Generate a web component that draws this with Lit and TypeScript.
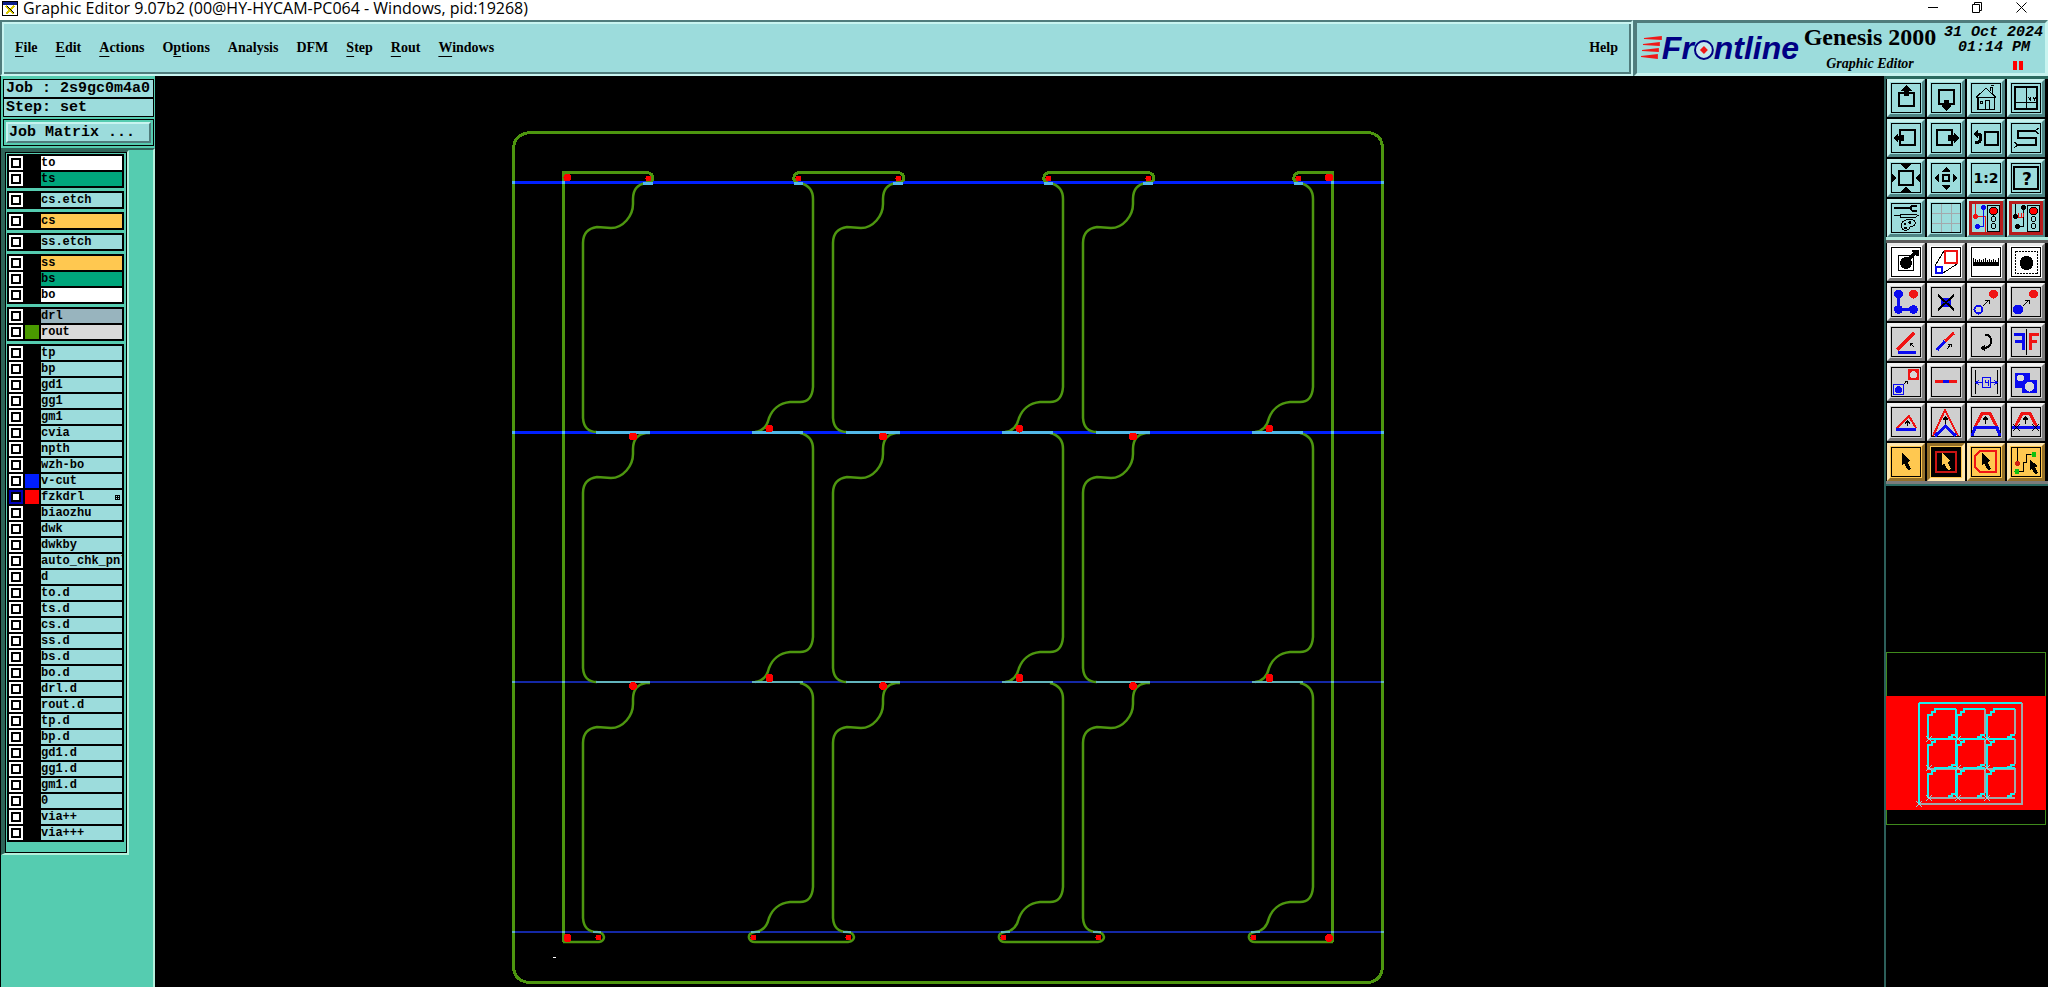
import { LitElement, html, svg, css, nothing, type SVGTemplateResult } from "lit";
import { customElement, property, state } from "lit/decorators.js";
import { classMap } from "lit/directives/class-map.js";

const BLUE = "#0a0af0";
const RED = "#f01414";

type Tone = "teal" | "alert" | "white" | "gray" | "amber" | "picked";

interface Tool {
  name: string;
  tone: Tone;
  art: SVGTemplateResult;
}

const line = (d: string, color = "#000", width = 1) =>
  svg`<path d=${d} fill="none" stroke=${color} stroke-width=${width} />`;
const shape = (d: string, color = "#000") => svg`<path d=${d} fill=${color} />`;
const dot = (x: number, y: number, r: number, color = "#000") =>
  svg`<circle cx=${x} cy=${y} r=${r} fill=${color} />`;
const ring = (x: number, y: number, r: number, color = "#000", width = 1) =>
  svg`<circle cx=${x} cy=${y} r=${r} fill="none" stroke=${color} stroke-width=${width} />`;

const pointer = (color: string) => shape("M11 6 L11 18 L13 16.5 L17 23 L20 22 L16.5 15 L19.5 14 Z", color);
const smallArrow = line("M12 19 L18 13 M14 13 H18 V17");
const upArrow = line("M14.5 17 V10 M12 12.5 L14.5 10 L17 12.5 M12.5 12.5 H16.5");
const lamps = svg`
  ${line("M16.5 2.5 H28.5 V28.5 H16.5 Z")}
  ${dot(22.5, 8, 4, "#f00")}${ring(22.5, 8, 4)}
  ${ring(22.5, 16, 2.5)}${ring(22.5, 23, 2.5)}`;

const viewTools: Tool[] = [
  { name: "Pan up", tone: "teal", art: svg`${line("M8 10 H23 V23 H8 Z", "#000", 2)}${shape("M15.5 2 L21 7 V8 H18 V13 H13 V8 H10 V7 Z")}` },
  { name: "Pan down", tone: "teal", art: svg`${line("M8 7 H23 V21 H8 Z", "#000", 2)}${shape("M13 17 H18 V22 H20 V23 L15.5 28 L11 23 V22 H13 Z")}` },
  { name: "Home", tone: "teal", art: svg`${line("M5 14.5 L15 5 L25 14.5 M7 13.5 V26 H23 V13.5 M5 14.5 H25", "#000")}${line("M6.5 14 V26 H23.5 V14", "#000", 1)}${line("M14.5 26 V17.5 H18.5 V26 M9 18 H11.5 V20.5 H9 Z M19 8 V4.5 H21.5 V10 M20 3 L23 2")}` },
  { name: "Coordinates view", tone: "teal", art: svg`${line("M4 4 H26 V26 H4 Z", "#000", 2)}${line("M15.5 4 V26 M4 19.5 H26")}${line("M17.5 14.5 L20 17.5 M20 14.5 L17.5 17.5 M22 14.5 L23.5 16 L25 14.5 M23.5 16 V18")}` },
  { name: "Pan left", tone: "teal", art: svg`${line("M9 7 H24 V22 H9 Z", "#000", 2)}${shape("M2 15 L7 10 V13 H8 V12 H13 V18 H8 V17 H7 V20 Z")}` },
  { name: "Pan right", tone: "teal", art: svg`${line("M6 7 H21 V22 H6 Z", "#000", 2)}${shape("M28 15 L23 10 V12 H17 V18 H23 V20 Z")}` },
  { name: "Previous view", tone: "teal", art: svg`${line("M14 9 H27 V22 H14 Z", "#000", 2)}${line("M4 20 Q10 20 10 14.5 Q10 11 6 11", "#000", 3)}${shape("M2 11 L7 6 V16 Z")}` },
  { name: "Snake view", tone: "teal", art: svg`${line("M24 8 H7 V15 H25 V22 H7", "#000", 2)}${line("M24 8 L28 5 M24 8 L28 11 M7 22 L3 19 M7 22 L3 25")}` },
  { name: "Zoom in", tone: "teal", art: svg`${line("M8 8 H22 V22 H8 Z", "#000", 2)}${shape("M10 1 H20 V2 L15 6 L10 2 Z M15 24 L20 28 V29 H10 V28 Z M1 10 L5 15 L1 20 Z M29 10 L25 15 L29 20 Z")}` },
  { name: "Zoom out", tone: "teal", art: svg`${line("M12 12 H18 V18 H12 Z", "#000", 2)}${shape("M15 4 L19 8 V9 H11 V8 Z M11 22 H19 V23 L15 27 L11 23 Z M4 15 L8 10 V20 Z M26 15 L22 10 V20 Z")}` },
  { name: "Actual scale", tone: "teal", art: svg`<text x="15" y="20" text-anchor="middle" class="glyph">1:2</text>` },
  { name: "Query", tone: "teal", art: svg`${line("M3 4 H27 V26 H3 Z", "#000", 2)}<text x="16" y="22" text-anchor="middle" class="glyph query">?</text>` },
  { name: "Options", tone: "teal", art: svg`${line("M3 5 H19", "#000", 2)}${line("M26 3 H21 L19 5 L21 7.5 H26", "#000", 2)}${line("M3 12.5 H9 M9 11 H24 L27 12.5 L24 14.5 H9 Z")}${line("M11 20 Q13 16 20 16.5 Q25 17 24 21 Q23 24 19 23.5 Q19 27 14 27.5 Q9 26 11 20")}${ring(14, 21, 1)}${ring(19, 19.5, 1)}${ring(14.5, 25, 1)}` },
  { name: "Grid", tone: "teal", art: line("M10.5 1 V29 M20.5 1 V29 M1 10.5 H29 M1 20.5 H29", "#a3a9ad") },
  { name: "Net check", tone: "alert", art: svg`${line("M4.5 1 V13.5 H14.5 V29", RED)}${line("M12.5 4 V23 H7", BLUE)}${dot(4.5, 13.5, 2.6, RED)}${dot(12.5, 4.5, 2.6, BLUE)}${dot(6.5, 23.5, 2.6, BLUE)}${lamps}` },
  { name: "Rule check", tone: "alert", art: svg`${line("M4.5 1 V13.5 M12.5 4 V23 H7")}${line("M5 14.5 H12 M7.5 14 V10 M10 14 V10 M12.5 14 V10", RED)}${dot(4.5, 13.5, 2.6)}${dot(12.5, 4.5, 2.6)}${dot(6.5, 23.5, 2.6)}${lamps}` },
];

const editTools: Tool[] = [
  { name: "Move feature", tone: "white", art: svg`${line("M7.5 8.5 H22.5 V23.5 H7.5 Z")}${dot(15, 16, 6)}${line("M18 12 L24 6", "#000", 3)}${shape("M21 3 H28 V9 H26 L21 5 Z")}` },
  { name: "Resize", tone: "white", art: svg`${line("M14 4 H26 V16 H14 Z", RED, 2)}${line("M5 20 H11 V26 H5 Z", BLUE, 2)}${line("M4 19 L13 4 M12 26 L26 17")}` },
  { name: "Measure", tone: "white", art: svg`${shape("M2 15 H28 V19 H2 Z")}${line("M2.5 11 V15 M4.5 12 V15 M6.5 13 V15 M8.5 12 V15 M10.5 13 V15 M12.5 12 V15 M14.5 11 V15 M16.5 13 V15 M18.5 12 V15 M20.5 13 V15 M22.5 12 V15 M24.5 13 V15 M27.5 11 V15")}` },
  { name: "Reference select", tone: "white", art: svg`<path d="M4.5 4.5 H26.5 V26.5 H4.5 Z" fill="none" stroke="#000" stroke-dasharray="2 1" />${dot(15.5, 16, 7)}` },
  { name: "Move vertex", tone: "gray", art: svg`${line("M7.5 7 V22.5 H22.5", BLUE, 3)}${dot(7.5, 7, 4.5, BLUE)}${dot(7.5, 22.5, 4.5, BLUE)}${dot(22.5, 22.5, 4.5, BLUE)}${dot(22.5, 7, 4.5, RED)}` },
  { name: "Delete", tone: "gray", art: svg`${dot(15, 15.5, 5, BLUE)}${line("M7 8 L23 23 M23 8 L7 23", "#000", 2)}` },
  { name: "Copy", tone: "gray", art: svg`${ring(7.5, 22.5, 4, BLUE, 2)}${dot(22.5, 7, 4.5, RED)}${smallArrow}` },
  { name: "Move", tone: "gray", art: svg`${dot(7, 22.5, 5, BLUE)}${dot(22.5, 7, 4.5, RED)}${smallArrow}` },
  { name: "Rotate line", tone: "gray", art: svg`${line("M6 23 L23 6", RED, 3)}${line("M7 25.5 H25", BLUE, 3)}${line("M23 20 L19 16 M19 19 V16 H22")}` },
  { name: "Extend line", tone: "gray", art: svg`${line("M6 23 L14 14", BLUE, 3)}${line("M14 14 L23 6", RED, 3)}${line("M16 22 L20 17 M17 17 H20 V20")}` },
  { name: "Rotate", tone: "gray", art: svg`${line("M14 7.5 Q20 8 20 14 Q20 21 12 21", "#000", 2)}${shape("M9 21 L14 17.5 V24.5 Z")}` },
  { name: "Mirror", tone: "gray", art: svg`${line("M3 7.5 H12.5 V23 M4 14.5 H13", BLUE, 3)}${line("M15.5 2 V28")}${line("M19.5 23 V7.5 H28 M19 14.5 H26", RED, 3)}` },
  { name: "Transform", tone: "gray", art: svg`${line("M2.5 17.5 H12.5 V27.5 H2.5 Z", BLUE)}${dot(7.5, 22.5, 3.5, BLUE)}${shape("M17 2 H28 V13 H17 Z", RED)}${dot(22.5, 7.5, 3.5, "#d8d8d8")}${line("M13 17 L16.5 14 M14 14 H16.5 V16.5")}` },
  { name: "Break line", tone: "gray", art: svg`${line("M4 14.5 H26", RED, 3)}${line("M12 14.5 H18", BLUE, 3)}` },
  { name: "Spacing", tone: "gray", art: svg`${line("M4.5 3 V27 M26.5 3 V27")}${line("M5 15.5 H11 M20 15.5 H26 M8 13 L5 15.5 L8 18 M23 13 L26 15.5 L23 18 M11.5 10.5 H19.5 V20.5 H11.5 Z M14 12.5 V15.5 H17.5 M17 12.5 V19", BLUE)}` },
  { name: "Merge", tone: "gray", art: svg`${shape("M4 6 H19 V13 H26 V26 H11 V21 H4 Z", BLUE)}${dot(9.5, 11, 3.5, "#d8d8d8")}${dot(18.5, 19.5, 5, "#d8d8d8")}` },
  { name: "Change angle", tone: "gray", art: svg`${line("M5 22 L18 9 L25 21", RED, 2)}${line("M5 22.5 H25", BLUE, 3)}${line("M16.5 19 V14 M14 16.5 L16.5 14 L19 16.5")}` },
  { name: "Move corner", tone: "gray", art: svg`${line("M2 29 L14 3 L27 29", RED, 2)}${line("M4 29 L14.5 19 L25 29", BLUE, 3)}${upArrow}` },
  { name: "Move segment", tone: "gray", art: svg`${line("M4 20 L11 6.5 H19 L26 20", RED, 3)}${line("M1 29 L4 20.5 H26 L29 29", BLUE, 3)}${upArrow}` },
  { name: "Move segment with limits", tone: "gray", art: svg`${line("M4 20 L11 6.5 H19 L26 20", RED, 3)}${line("M1 20.5 H29", BLUE, 3)}${line("M2 17 L9 24 M9 17 L2 24 M21 17 L28 24 M28 17 L21 24")}${upArrow}` },
  { name: "Select single", tone: "amber", art: pointer("#000") },
  { name: "Select frame", tone: "picked", art: svg`${shape("M1 1 H29 V29 H1 Z")}${line("M5 5 H25 V25 H5 Z", "#c81414", 2)}${pointer("#ffc850")}` },
  { name: "Select polygon", tone: "amber", art: svg`${line("M9 4 H25 V25 H9 L4 20 V9 Z", RED, 2)}${pointer("#000")}` },
  { name: "Select net", tone: "amber", art: svg`${line("M6.5 1 V16 M6 24.5 H12.5 V15.5 H15.5 V7.5 H23")}${dot(6.5, 16.5, 2.5, "#d02010")}${dot(6, 24.5, 2.5, "#10c010")}${dot(23, 7.5, 2.5, "#10c010")}${shape("M19 13 V23 L21 22 L24 27 L27 26 L24 20 L27 19 Z")}` },
];

interface Layer {
  name: string;
  tone: string;
  swatch?: string;
  active?: boolean;
}

const plain = (...names: string[]): Layer[] => names.map((name) => ({ name, tone: "plain" }));

const layerGroups: Layer[][] = [
  [{ name: "to", tone: "mask" }, { name: "ts", tone: "solder" }],
  plain("cs.etch"),
  [{ name: "cs", tone: "copper" }],
  plain("ss.etch"),
  [{ name: "ss", tone: "copper" }, { name: "bs", tone: "solder" }, { name: "bo", tone: "mask" }],
  [{ name: "drl", tone: "drill" }, { name: "rout", tone: "rout", swatch: "green" }],
  [
    ...plain("tp", "bp", "gd1", "gg1", "gm1", "cvia", "npth", "wzh-bo"),
    { name: "v-cut", tone: "plain", swatch: "blue" },
    { name: "fzkdrl", tone: "plain", swatch: "red", active: true },
    ...plain(
      "biaozhu", "dwk", "dwkby", "auto_chk_pnl", "d", "to.d", "ts.d", "cs.d", "ss.d", "bs.d", "bo.d",
      "drl.d", "rout.d", "tp.d", "bp.d", "gd1.d", "gg1.d", "gm1.d", "0", "via++", "via+++",
    ),
  ],
];

@customElement("tool-grid")
class ToolGrid extends LitElement {
  @property({ attribute: false }) tools: Tool[] = [];

  static styles = css`
    :host { display: block; }
    .grid { display: grid; grid-template-columns: repeat(4, 38px); gap: 2px; }
    button { display: grid; place-items: center; height: 38px; padding: 0; border: 3px solid; border-radius: 0; }
    svg { display: block; width: 30px; height: 30px; shape-rendering: crispEdges; }
    .teal, .alert { background: #9cdcdc; border-color: #c6f2ee #4f8484 #4f8484 #c6f2ee; }
    .alert svg { outline: 2px solid #b81c1c; outline-offset: 0; box-shadow: inset 0 0 0 1px #b81c1c; }
    .white { background: #fff; border-color: #ececec #7c7c7c #7c7c7c #ececec; }
    .gray { background: #cfcfcf; border-color: #f2f2f2 #7c7c7c #7c7c7c #f2f2f2; }
    .amber { background: #ffc850; border-color: #ffe6ae #94702a #94702a #ffe6ae; }
    .picked { background: #ffc850; border-color: #94702a #ffe6ae #ffe6ae #94702a; }
    .frame { fill: none; stroke: #000; }
    .glyph { font: bold 14px "DejaVu Sans", sans-serif; }
    .query { font: bold 17px "DejaVu Sans", sans-serif; }
  `;

  render() {
    return html`<div class="grid">
      ${this.tools.map(
        (t) => html`<button type="button" class=${t.tone} aria-label=${t.name}>
          <svg viewBox="0 0 30 30">
            ${t.tone === "alert" ? nothing : svg`<rect class="frame" x="0.5" y="0.5" width="29" height="29" />`}
            ${t.art}
          </svg>
        </button>`,
      )}
    </div>`;
  }
}

@customElement("layer-list")
class LayerList extends LitElement {
  @state() private shown = new Set<string>();

  static styles = css`
    :host { display: block; }
    .list {
      display: flex; flex-direction: column; gap: 3px; padding: 1px 2px 10px 1px;
      border: 1px solid #000;
    }
    .bevel { border-style: solid; border-width: 2px 2px 2px 4px; border-color: #2e6458 #b4f0dc #b4f0dc #2e6458; }
    .group { display: flex; flex-direction: column; gap: 2px; padding: 2px; background: #000; }
    .row { display: grid; grid-template-columns: 14px 14px 1fr; gap: 2px; height: 14px; }
    input {
      appearance: none; margin: 0; width: 14px; height: 14px; border: 2px solid #fff;
      background: #fff; box-shadow: inset 0 0 0 2px #000;
    }
    input.active { border-color: #0000b8; }
    .green { background: #4a9a00; }
    .blue { background: #001eff; }
    .red { background: #ff0000; }
    label {
      display: flex; align-items: center; min-width: 0; overflow: hidden; color: #000;
      font: bold 12px/14px "Liberation Mono", monospace; white-space: nowrap;
    }
    .mask { background: #fff; }
    .solder { background: #00a67c; }
    .plain { background: #9cdcdc; }
    .copper { background: #ffc850; }
    .drill { background: #98b4be; }
    .rout { background: #dadada; }
    svg { width: 5px; height: 5px; margin: 0 2px 0 auto; }
  `;

  private toggle(name: string) {
    const next = new Set(this.shown);
    next.has(name) ? next.delete(name) : next.add(name);
    this.shown = next;
  }

  render() {
    return html`<div class="bevel"><div class="list">
      ${layerGroups.map(
        (group) => html`<div class="group">
          ${group.map(
            (l) => html`<div class="row">
              <input type="checkbox" id="layer-${l.name}" class=${classMap({ active: !!l.active })}
                .checked=${this.shown.has(l.name)} @change=${() => this.toggle(l.name)} />
              <span class=${l.swatch ?? ""}></span>
              <label for="layer-${l.name}" class=${l.tone}>${l.name}${l.active
                ? html`<svg viewBox="0 0 5 5" shape-rendering="crispEdges"><path d="M0.5 0.5 H4.5 V4.5 H0.5 Z M2.5 0 V5 M0 2.5 H5" fill="none" stroke="#000" /></svg>`
                : nothing}</label>
            </div>`,
          )}
        </div>`,
      )}
    </div></div>`;
  }
}

const columns = [0, 250, 500];
const rows = [0, 250, 500];

@customElement("panel-drawing")
class PanelDrawing extends LitElement {
  static styles = css`
    :host { display: block; min-width: 0; min-height: 0; background: #000; overflow: hidden; }
    svg { display: block; width: 100%; height: 100%; shape-rendering: crispEdges; }
    path { fill: none; }
    .rout { stroke: #4d960f; }
    .thick { stroke-width: 3; }
    .thin { stroke-width: 2.5; shape-rendering: geometricPrecision; }
    .cut { stroke: #0020ff; stroke-width: 3; }
    .faint { stroke: #1428a6; stroke-width: 2; }
    .overlap { stroke: #52b8e8; stroke-width: 3; }
    .dim { stroke: #62b4bc; stroke-width: 2; }
    .hole { fill: #ff0000; }
    .origin { stroke: #fff; }
  `;

  /* Left and right contour of one board, relative to its grid cell. */
  private board(dx: number, dy: number) {
    return svg`<g transform="translate(${dx} ${dy})">
      <path class="rout thin" d="M650 183 H646 Q633 185 633 199 V204 C633 216 623 228 611 228 L597 227 Q583 229 583 243 V418 Q584 432 597 432" />
      <path class="rout thin" d="M800 183 Q813 186 813 199 V387 Q812 402 800 402 H790 C779 403 772 410 769 418 Q766 431 755 432" />
    </g>`;
  }

  private contact(dx: number, y: number) {
    return svg`
      <path class=${y > 600 ? "dim" : "overlap"} d="M${596 + dx} ${y} H${650 + dx} M${752 + dx} ${y} H${803 + dx}" />
      <circle class="hole" cx=${633 + dx} cy=${y + 4} r="4" />
      <circle class="hole" cx=${769.5 + dx} cy=${y - 4} r="4" />`;
  }

  render() {
    const holesTop = [648, 798, 898, 1048, 1148, 1298];
    const holesBottom = [598, 753, 848, 1003, 1098, 1253];
    return html`<svg viewBox="155 76 1729 911" role="img" aria-label="Panel routing">
      <path class="rout thick" d="M530.5 132.5 H1368 Q1382.5 134 1382.5 149 V966 Q1382 981 1368 982.5 H528 Q513.5 980 513.5 966 V149 Q514 134 530.5 132.5 Z" />
      <path class="cut" d="M513 182.5 H1383 M513 432.5 H1383" />
      <path class="faint" d="M513 682 H1383 M513 932 H1383" />
      <path class="rout thick" d="M563.5 171 V942" />
      <path class="rout thick" d="M1332.5 171 V942" />
      <path class="rout thick" d="M563 172.5 H646 Q653 173 653 178 Q653 183 646 183" />
      ${[0, 250].map((dx) => svg`
        <path class="rout thick" transform="translate(${dx} 0)" d="M798 183 Q793 182 794 177 Q795 172.5 800 172.5 H897 Q904 173 904 178 Q903 183 896 183" />
        <path class="rout thin" transform="translate(${dx} 0)" d="M755 932 Q748 933 749 938 Q750 942 755 942 H848 Q854 941 854 937 Q853 932 847 932" />`)}
      <path class="rout thick" d="M1298 183 Q1293 182 1294 177 Q1295 172.5 1300 172.5 H1333" />
      <path class="rout thin" d="M563 942 H599 Q604 941 604 937 Q603 932 597 932 M1255 932 Q1248 933 1249 938 Q1250 942 1255 942 H1333" />
      ${rows.map((dy) => columns.map((dx) => this.board(dx, dy)))}
      ${columns.map((dx) => svg`
        <path class="overlap" d="M${643 + dx} 183 H${653 + dx} M${794 + dx} 183 H${803 + dx}" />
        <path class="dim" d="M${593 + dx} 932 H${601 + dx} M${751 + dx} 932 H${760 + dx}" />
        ${this.contact(dx, 432.5)}${this.contact(dx, 682)}`)}
      <path class="overlap" d="M512 182.5 H515 M562 182.5 H565 M1331 182.5 H1334 M1381 182.5 H1384 M512 432.5 H515 M562 432.5 H565 M1331 432.5 H1334 M1381 432.5 H1384" />
      <path class="dim" d="M512 682 H515 M562 682 H565 M1331 682 H1334 M1381 682 H1384 M512 932 H515 M562 932 H565 M1331 932 H1334 M1381 932 H1384" />
      ${holesTop.map((x) => svg`<circle class="hole" cx=${x + 0.5} cy="178.5" r="3" />`)}
      ${holesBottom.map((x) => svg`<circle class="hole" cx=${x + 0.5} cy="937.5" r="3" />`)}
      <circle class="hole" cx="567.5" cy="177.5" r="4" />
      <circle class="hole" cx="1329" cy="177.5" r="4" />
      <circle class="hole" cx="567.5" cy="938" r="4" />
      <circle class="hole" cx="1329" cy="938" r="4" />
      <path class="origin" d="M553 957.5 H556" />
    </svg>`;
  }
}

@customElement("panel-overview")
class PanelOverview extends LitElement {
  static styles = css`
    :host { display: block; overflow: hidden; background: #000; }
    svg { display: block; width: 100%; shape-rendering: crispEdges; }
    path, .limit { fill: none; }
    .limit { stroke: #3f8a1c; }
    .field { fill: #ff0000; }
    .lit { stroke: #1cecec; stroke-width: 2; }
    .shade { stroke: #a2a6a8; stroke-width: 2; }
    .mark { stroke: #8cd8dc; }
  `;

  private cell(x: number, y: number, column: number, row: number) {
    return svg`<g transform="translate(${x} ${y})">
      <path class=${column === 0 ? "lit" : "shade"} d="M28 0 V25" />
      <path class=${row === 0 ? "lit" : "shade"} d="M0 30 H28" />
      <path class="lit" d="M28 0 H7 V3 H4 V6 H0 V30 M28 26 H24 V28 H21 V30" />
    </g>`;
  }

  render() {
    return html`<svg viewBox="0 -1 162 342" role="img" aria-label="Panel overview">
      <rect class="limit" x="0.5" y="165.5" width="159" height="172" />
      <rect class="field" x="0" y="209" width="160" height="114" />
      <path class="lit" d="M33 317 V217 Q33 216 35 216 H136" />
      <path class="shade" d="M136 216 V317 H33" />
      ${[0, 1, 2].map((r) => [0, 1, 2].map((c) => this.cell([42, 71, 101][c], [222, 252, 281][r], c, r)))}
      <path class="mark" d="M30 314 L36 320 M36 314 L30 320" />
      ${[43, 72, 101].map((x) => [252, 281, 311].map((y) => svg`<path class="mark" d="M${x - 3} ${y - 3} L${x + 3} ${y + 3} M${x + 3} ${y - 3} L${x - 3} ${y + 3}" />`))}
    </svg>`;
  }
}

const menus: [string, string, string][] = [
  ["", "F", "ile"], ["", "E", "dit"], ["", "A", "ctions"], ["O", "p", "tions"], ["Analysis", "", ""],
  ["DFM", "", ""], ["", "S", "tep"], ["", "R", "out"], ["", "W", "indows"],
];

@customElement("app-root")
class AppRoot extends LitElement {
  static styles = css`
    :host {
      display: grid; grid-template-rows: 20px 56px minmax(0, 1fr); height: 100vh; overflow: hidden;
      background: #000; color: #000;
    }
    button { margin: 0; padding: 0; border: 0; border-radius: 0; background: none; color: inherit; }
    .title { display: flex; align-items: flex-start; gap: 4px; padding: 0 17px 0 2px; background: #fff; }
    .title h1 { flex: 1; margin: 0; font: 400 16px/17px "Open Sans", sans-serif; }
    .title svg { display: block; }
    .window { display: flex; gap: 24px; }
    .window button { display: grid; place-items: center; width: 20px; height: 15px; }
    .head { display: flex; gap: 1px; background: #4f8080; }
    .menubar, .brand { box-sizing: border-box; background: #9cdcdc; border: 2px solid; }
    .menubar {
      flex: 1; display: flex; align-items: center; gap: 18px; padding: 0 13px 0 13px;
      border-color: #4f7c7c #c8f4f0 #c8f4f0 #4f7c7c; box-shadow: inset 2px 2px #c8f4f0, inset -2px -2px #4f7c7c;
    }
    .menubar button { font: bold 14px/18px "Liberation Serif", serif; }
    u { text-decoration-thickness: 1px; text-underline-offset: 4px; }
    .help { margin-left: auto; }
    .brand {
      display: grid; grid-template-columns: 158px 142px 1fr; width: 414px; padding: 0 2px 0 4px;
      border-width: 3px; border-color: #4f7c7c #c8f4f0 #c8f4f0 #4f7c7c;
    }
    .logo { display: flex; align-items: center; color: #000084; font: italic bold 32px/40px "Liberation Sans", sans-serif; }
    .logo svg { display: block; }
    .product { display: flex; flex-direction: column; align-items: center; justify-content: space-between; }
    .product strong { font: bold 24px/28px "Liberation Serif", serif; white-space: nowrap; }
    .product em { font: italic bold 14px/18px "Liberation Serif", serif; }
    .clock { display: flex; flex-direction: column; align-items: flex-end; padding-top: 2px; font: italic bold 15px/15px "Liberation Mono", monospace; white-space: nowrap; }
    .time { padding-right: 13px; }
    .pause { display: flex; gap: 2px; padding: 6px 20px 0 0; }
    .pause i { width: 4px; height: 9px; background: #ff0000; }
    .work { display: grid; grid-template-columns: 155px minmax(0, 1fr) 164px; }
    .side { display: flex; flex-direction: column; min-height: 0; background: #55ccb0; border-left: 1px solid #000; }
    .facts { margin: 3px 1px 0 2px; border: 1px solid #000; background: #000; font: bold 15px/17px "Liberation Mono", monospace; display: grid; gap: 2px; }
    .facts div { padding: 0 2px; background: #9cdcdc; white-space: pre; }
    .matrix { margin: 2px 1px 2px 2px; padding: 2px; border: 1px solid #000; }
    .matrix button {
      display: block; width: 100%; height: 21px; padding: 0 1px; text-align: left; background: #9cdcdc;
      border: 2px solid; border-color: #c8f4f0 #4f7c7c #4f7c7c #c8f4f0; font: bold 15px/17px "Liberation Mono", monospace;
    }
    .layers { flex: 1; min-height: 0; border-top: 2px solid #2e6458; border-right: 2px solid #b4f0dc; overflow: hidden; }
    layer-list { width: 128px; }
    .tools { box-sizing: border-box; display: flex; flex-direction: column; min-height: 0; overflow: hidden; border-left: 2px solid #2c5f5a; }
    .block { padding: 0 1px; background: #000; border-style: solid; border-width: 3px 0; }
    .view { border-color: #2c6b60 #000 #aeeadc; }
    .edit { border-color: #5c5c5c #000 #7c7c7c; }
    panel-overview { border-top: 2px solid #2c6b64; flex: 1; }
  `;

  render() {
    return html`
      <header class="title">
        <svg width="17" height="17" viewBox="0 -1 17 17" shape-rendering="crispEdges">
          <rect x="0.5" y="0.5" width="15" height="14" fill="#fff" stroke="#000" />
          <rect x="1" y="1" width="14" height="3" fill="#0a1e8c" />
          <path d="M4 5 L12 13 M12 5 L4 13" stroke="#d8c800" stroke-width="2" />
          <path d="M5 5 L12 12" stroke="#000" />
        </svg>
        <h1>Graphic Editor 9.07b2 (00@HY-HYCAM-PC064 - Windows, pid:19268)</h1>
        <div class="window">
          <button type="button" aria-label="Minimize"><svg width="11" height="11"><path d="M0 5.5 H10" stroke="#000" /></svg></button>
          <button type="button" aria-label="Restore"><svg width="11" height="11"><path d="M0.5 2.5 H7.5 V10.5 H0.5 Z M2.5 2.5 V0.5 H9.5 V8.5 H7.5" fill="none" stroke="#000" /></svg></button>
          <button type="button" aria-label="Close"><svg width="11" height="11"><path d="M0.5 0.5 L10.5 10.5 M10.5 0.5 L0.5 10.5" stroke="#000" /></svg></button>
        </div>
      </header>
      <div class="head">
        <nav class="menubar">
          ${menus.map(([before, key, after]) => html`<button type="button">${before}${key ? html`<u>${key}</u>` : nothing}${after}</button>`)}
          <button type="button" class="help">Help</button>
        </nav>
        <div class="brand">
          <div class="logo">
            <svg width="21" height="24" viewBox="0 0 21 24">
              <path d="M3 2 L21 0 V4 L3 3 Z M2 8 L19 6 V10 L2 9 Z M1 14 L18 12 V16 L1 15 Z M0 20 L17 18 V23 L0 21 Z" fill="#f01818" />
            </svg>
            <span>Fr</span>
            <svg width="20" height="24" viewBox="0 0 20 24">
              <circle cx="10" cy="14" r="9" fill="#c4e8ec" stroke="#000084" stroke-width="2" />
              <path d="M10 10 L14 14 L10 18 L6 14 Z" fill="#f01818" />
            </svg>
            <span>ntline</span>
          </div>
          <div class="product"><strong>Genesis 2000</strong><em>Graphic Editor</em></div>
          <div class="clock">
            <span>31 Oct 2024</span><span class="time">01:14 PM</span>
            <span class="pause"><i></i><i></i></span>
          </div>
        </div>
      </div>
      <main class="work">
        <aside class="side">
          <div class="facts"><div>Job : 2s9gc0m4a0</div><div>Step: set</div></div>
          <div class="matrix"><button type="button">Job Matrix ...</button></div>
          <div class="layers"><layer-list></layer-list></div>
        </aside>
        <panel-drawing></panel-drawing>
        <aside class="tools">
          <div class="block view"><tool-grid .tools=${viewTools}></tool-grid></div>
          <div class="block edit"><tool-grid .tools=${editTools}></tool-grid></div>
          <panel-overview></panel-overview>
        </aside>
      </main>
    `;
  }
}
